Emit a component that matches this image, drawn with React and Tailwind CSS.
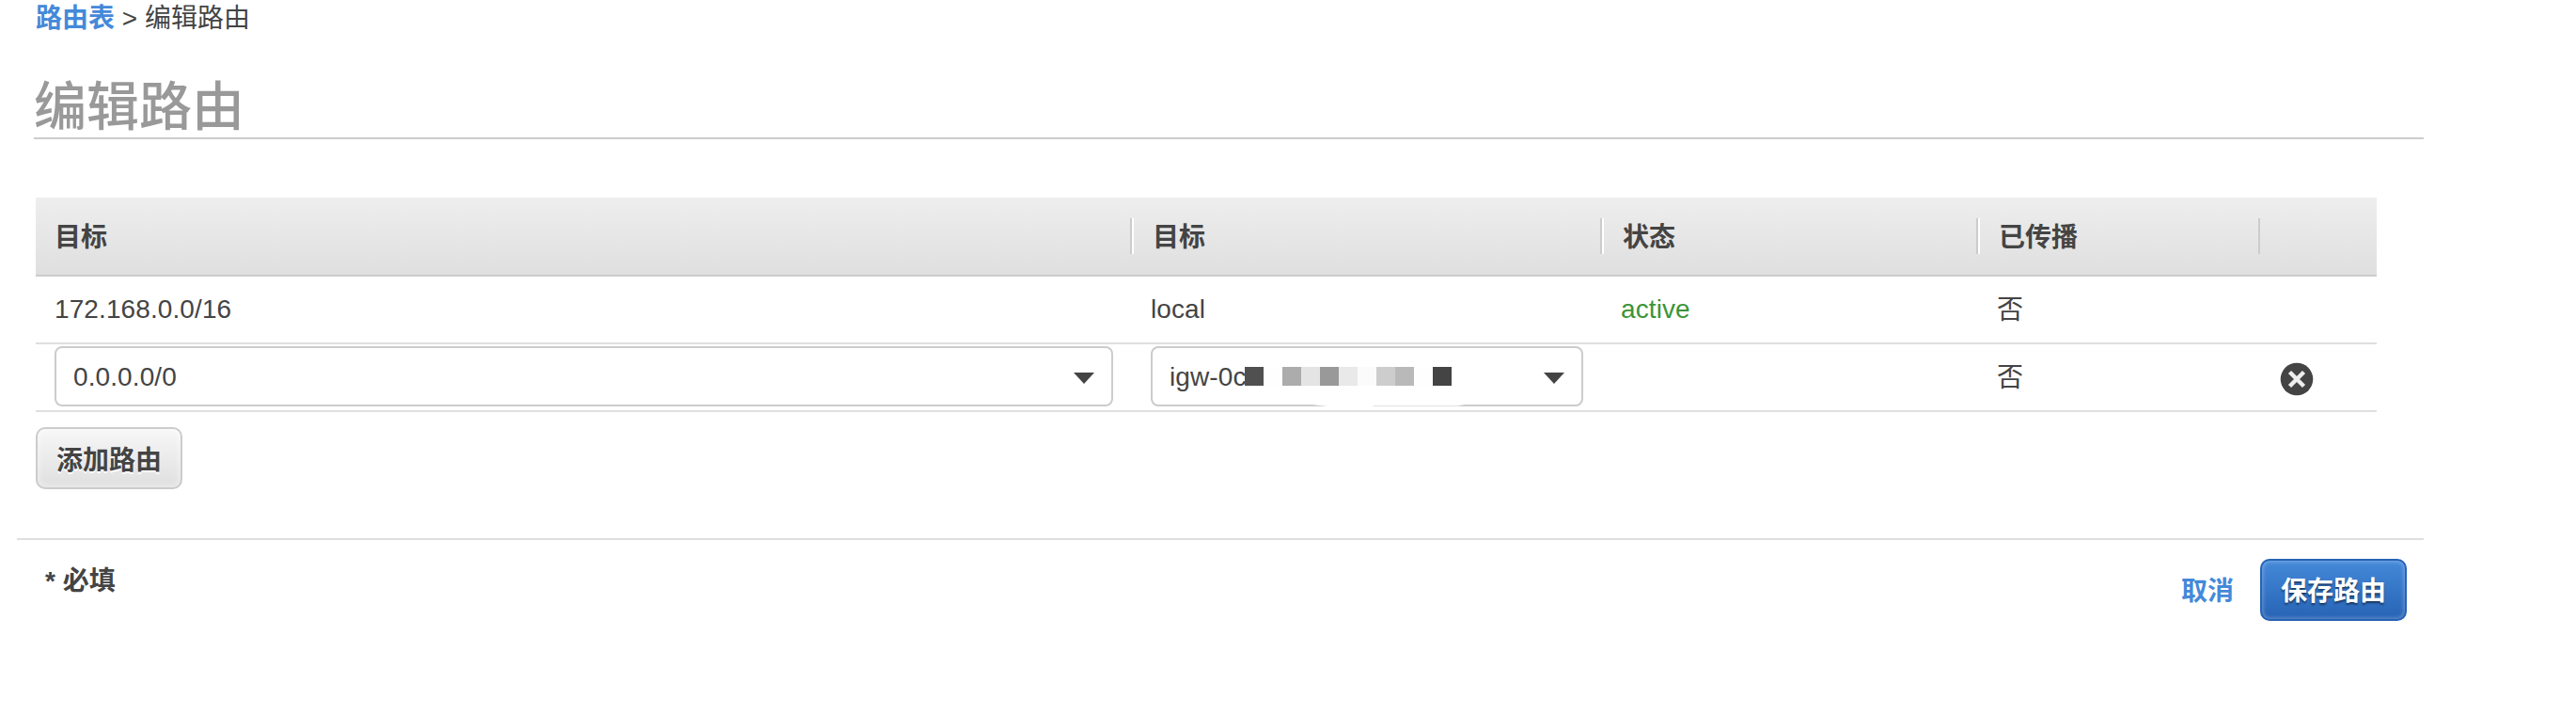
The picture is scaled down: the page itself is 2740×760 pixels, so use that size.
import React, { useState } from 'react';

const COLUMNS = ['目标', '目标', '状态', '已传播', ''];

const GRID = 'grid grid-cols-[1166px_500px_400px_300px_124px]';

// Blocks that cover the rest of the gateway id
const MASK = [
  'bg-[#505050]',
  'bg-[#fefefe]',
  'bg-[#acacac]',
  'bg-[#e4e4e4]',
  'bg-[#999999]',
  'bg-[#e9e9e9]',
  'bg-[#fbfbfb]',
  'bg-[#cdcdcd]',
  'bg-[#b9b9b9]',
  'bg-[#fefefe]',
  'bg-[#444444]',
];

const Caret = () => (
  <svg className="w-[22px] h-3 mt-1 shrink-0" viewBox="0 0 22 12" fill="#444444">
    <path d="M0 0h22L11 12z" />
  </svg>
);

const Select = ({ value, children }) => (
  <div className="relative h-16 mt-0.5 mx-5 pl-[18px] pr-[18px] flex items-center justify-between border-2 border-[#cccccc] rounded-lg bg-white cursor-pointer">
    <span className="pt-0.5 leading-8 tracking-[0.1px]">{value}</span>
    <Caret />
    {children}
  </div>
);

const MaskedId = () => (
  <>
    <div className="absolute left-[98px] top-5 flex">
      {MASK.map((color, i) => (
        <div key={i} className={`w-5 h-5 ${color}`} />
      ))}
    </div>
    <svg className="absolute left-[170px] top-[60px] w-[162px] h-0.5" viewBox="0 0 162 2">
      <path d="M0 0h162L156 1H64L68 2H16z" fill="#ffffff" />
      <path d="M64 1h92v1H68z" fill="#e0e0e0" />
    </svg>
  </>
);

const RemoveIcon = () => (
  <svg className="w-9 h-9" viewBox="0 0 36 36">
    <circle cx="18" cy="18" r="17.3" fill="#444444" />
    <path d="M10.5 10.5l15 15M25.5 10.5l-15 15" stroke="#eeeeee" strokeWidth="4.4" />
  </svg>
);

const App = () => {
  const [hasRoute, setHasRoute] = useState(true);

  return (
    <div className="w-[2740px] h-[760px] overflow-hidden bg-white text-[28px] leading-8 text-[#444444] font-['Liberation_Sans','Noto_Sans_CJK_SC',sans-serif]">
      {/* Breadcrumb + title */}
      <div className="ml-9 w-[2542px] h-[148px] border-b-2 border-[#cccccc]">
        <div className="pl-0.5 pt-1 h-[78px] whitespace-pre">
          <a className="font-bold text-[#4489d9] cursor-pointer">路由表</a> &gt; 编辑路由
        </div>
        <h1 className="text-[56px] leading-[72px] font-medium text-[#999999]">编辑路由</h1>
      </div>

      {/* Routes table */}
      <div className="ml-[38px] mt-[62px] w-[2490px]">
        <div className={`${GRID} h-[84px] items-center font-bold bg-linear-to-b from-[#eeeeee] to-[#dfdfdf] border-b-2 border-[#cccccc]`}>
          {COLUMNS.map((label, i) => (
            <div
              key={i}
              className={`h-[38px] pt-1 pl-5 flex items-center ${i === 0 || i === 4 ? '' : 'border-l-2 border-l-white'} ${i === 4 ? '' : 'border-r-2 border-r-[#cccccc]'}`}
            >
              {label}
            </div>
          ))}
        </div>

        <div className={`${GRID} h-[72px] items-center border-b-2 border-[#dfdfdf]`}>
          <div className="pl-5 tracking-[0.1px]">172.168.0.0/16</div>
          <div className="pl-5 tracking-[0.1px]">local</div>
          <div className="pl-5 tracking-[0.1px] text-[#3b9437]">active</div>
          <div className="pl-5 pt-0.5">否</div>
        </div>

        {hasRoute && (
          <div className={`${GRID} h-[72px] border-b-2 border-[#dfdfdf]`}>
            <Select value="0.0.0.0/0" />
            <Select value="igw-0c">
              <MaskedId />
            </Select>
            <div />
            <div className="pl-5 pt-0.5 self-center">否</div>
            <button className="ml-[21px] mt-[19px] w-9 h-9 cursor-pointer" onClick={() => setHasRoute(false)}>
              <RemoveIcon />
            </button>
          </div>
        )}
      </div>

      <button
        className="ml-[38px] mt-4 w-[156px] h-[66px] pt-1.5 flex items-center justify-center font-bold border-2 border-[#cccccc] rounded-[10px] bg-linear-to-b from-[#f7f7f7] to-[#dfdfdf] shadow-[inset_0_0_6px_2px_rgba(255,255,255,0.4)] [text-shadow:0_2px_0_#ffffff] cursor-pointer"
        onClick={() => setHasRoute(true)}
      >
        添加路由
      </button>

      {/* Footer */}
      <div className="ml-[18px] mt-[52px] w-[2560px] pl-[30px] pr-[18px] flex justify-between border-t-2 border-[#dfdfdf]">
        <div className="mt-7 font-bold">* 必填</div>
        <div className="mt-5 flex items-center">
          <a className="mr-7 pt-1 font-bold text-[#4489d9] cursor-pointer">取消</a>
          <button className="w-[156px] h-[66px] pt-1 flex items-center justify-center font-bold text-white border-2 border-[#2763b5] rounded-[10px] bg-linear-to-b from-[#4489d9] to-[#2763b5] shadow-[inset_0_0_4px_1px_rgba(255,255,255,0.3)] [text-shadow:0_2px_2px_rgba(0,0,0,0.5)] cursor-pointer">
            保存路由
          </button>
        </div>
      </div>
    </div>
  );
};

export default App;
